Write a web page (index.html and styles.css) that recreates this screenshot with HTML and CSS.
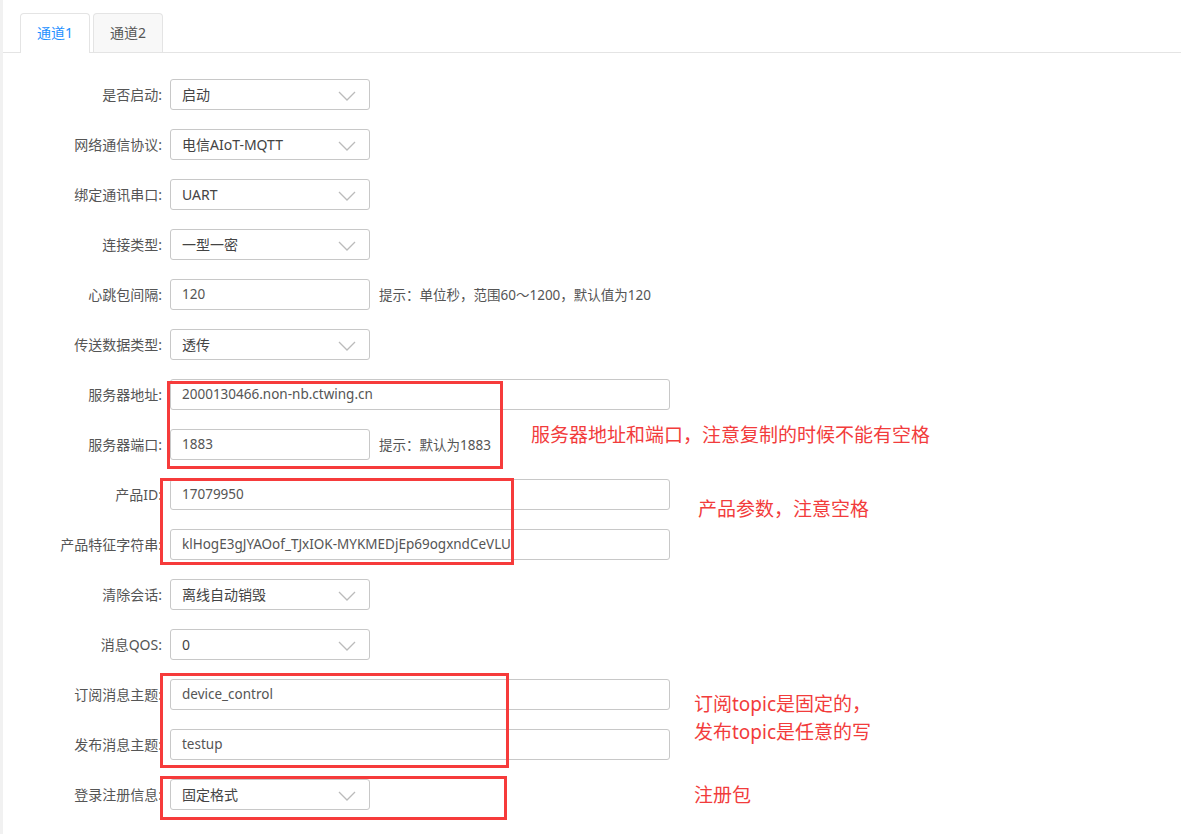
FILE: index.html
```html
<!DOCTYPE html>
<html lang="zh-CN">
<head>
  <meta charset="UTF-8" />
  <title>通道配置</title>
  <link rel="stylesheet" href="styles.css">
</head>
<body>
  <div class="page">
    <div class="tabs">
      <div class="tab active">通道1</div>
      <div class="tab">通道2</div>
    </div>

    <form class="config">
      <div class="row">
        <label>是否启动:</label>
        <div class="select">启动<svg class="arrow" viewBox="0 0 18 10"><polyline points="1,1 9,9 17,1" /></svg></div>
      </div>
      <div class="row">
        <label>网络通信协议:</label>
        <div class="select">电信AIoT-MQTT<svg class="arrow" viewBox="0 0 18 10"><polyline points="1,1 9,9 17,1" /></svg></div>
      </div>
      <div class="row">
        <label>绑定通讯串口:</label>
        <div class="select">UART<svg class="arrow" viewBox="0 0 18 10"><polyline points="1,1 9,9 17,1" /></svg></div>
      </div>
      <div class="row">
        <label>连接类型:</label>
        <div class="select">一型一密<svg class="arrow" viewBox="0 0 18 10"><polyline points="1,1 9,9 17,1" /></svg></div>
      </div>
      <div class="row">
        <label>心跳包间隔:</label>
        <div class="input short">120</div>
        <span class="hint">提示：单位秒，范围60～1200，默认值为120</span>
      </div>
      <div class="row">
        <label>传送数据类型:</label>
        <div class="select">透传<svg class="arrow" viewBox="0 0 18 10"><polyline points="1,1 9,9 17,1" /></svg></div>
      </div>
      <div class="row">
        <label>服务器地址:</label>
        <div class="input">2000130466.non-nb.ctwing.cn</div>
      </div>
      <div class="row">
        <label>服务器端口:</label>
        <div class="input short">1883</div>
        <span class="hint">提示：默认为1883</span>
      </div>
      <div class="row">
        <label>产品ID:</label>
        <div class="input">17079950</div>
      </div>
      <div class="row">
        <label>产品特征字符串:</label>
        <div class="input">klHogE3gJYAOof_TJxIOK-MYKMEDjEp69ogxndCeVLU</div>
      </div>
      <div class="row">
        <label>清除会话:</label>
        <div class="select">离线自动销毁<svg class="arrow" viewBox="0 0 18 10"><polyline points="1,1 9,9 17,1" /></svg></div>
      </div>
      <div class="row">
        <label>消息QOS:</label>
        <div class="select">0<svg class="arrow" viewBox="0 0 18 10"><polyline points="1,1 9,9 17,1" /></svg></div>
      </div>
      <div class="row">
        <label>订阅消息主题:</label>
        <div class="input">device_control</div>
      </div>
      <div class="row">
        <label>发布消息主题:</label>
        <div class="input">testup</div>
      </div>
      <div class="row">
        <label>登录注册信息:</label>
        <div class="select">固定格式<svg class="arrow" viewBox="0 0 18 10"><polyline points="1,1 9,9 17,1" /></svg></div>
      </div>
    </form>

    <!-- annotations drawn over the form -->
    <div class="mark mark-server"></div>
    <div class="mark mark-product"></div>
    <div class="mark mark-topic"></div>
    <div class="mark mark-login"></div>

    <div class="note note-server">服务器地址和端口，注意复制的时候不能有空格</div>
    <div class="note note-product">产品参数，注意空格</div>
    <div class="note note-topic">订阅topic是固定的，<br>发布topic是任意的写</div>
    <div class="note note-login">注册包</div>
  </div>
</body>
</html>
```

FILE: styles.css
```css
body {
  margin: 0;
  font-family: 'Noto Sans', 'Noto Sans CJK SC', sans-serif;
  font-size: 14px;
  color: #555;
  background: #fff;
}

.page {
  position: relative;
  min-height: 834px;
  border-left: 3px solid #f1f1f1;
}

.tabs {
  display: flex;
  gap: 3px;
  padding: 13px 0 0 17px;
  border-bottom: 1px solid #e4e4e4;
}

.tab {
  height: 38px;
  line-height: 38px;
  padding: 0 16px;
  border: 1px solid #e4e4e4;
  border-bottom: none;
  border-radius: 4px 4px 0 0;
  background: #f8f8f8;
  color: #555;
  margin-bottom: -1px;
}

.tab.active {
  background: #fff;
  color: #1e90ff;
  height: 39px;
}

.config {
  padding-top: 16px;
}

.row {
  display: flex;
  align-items: center;
  height: 50px;
}

.row label {
  width: 159px;
  text-align: right;
  margin-right: 8px;
  color: #555;
}

.select, .input {
  box-sizing: border-box;
  height: 31px;
  line-height: 29px;
  border: 1px solid #c8c8c8;
  border-radius: 3px;
  padding: 0 11px;
  color: #444;
  white-space: nowrap;
}

.select {
  width: 200px;
  display: flex;
  align-items: center;
  justify-content: space-between;
}

.input {
  width: 500px;
  font-size: 13.5px;
  color: #555;
}

.input.short {
  width: 200px;
}

.arrow {
  width: 18px;
  height: 10px;
  margin-right: 2px;
  margin-top: 4px;
}

.arrow polyline {
  fill: none;
  stroke: #bbb;
  stroke-width: 1.3;
}

.hint {
  margin-left: 9px;
  font-size: 13.5px;
  color: #555;
}

.mark {
  position: absolute;
  border: 3px solid #f63b3b;
  box-sizing: border-box;
}

.mark-server { left: 164px; top: 381px; width: 336px; height: 88px; }
.mark-product { left: 157px; top: 478px; width: 354px; height: 87px; }
.mark-topic { left: 157px; top: 673px; width: 349px; height: 95px; }
.mark-login { left: 157px; top: 776px; width: 347px; height: 44px; }

.note {
  position: absolute;
  font-size: 19px;
  line-height: 28px;
  color: #f23c3c;
  white-space: nowrap;
}

.note-server { left: 528px; top: 421px; }
.note-product { left: 695px; top: 495px; }
.note-topic { left: 691px; top: 690px; }
.note-login { left: 691px; top: 781px; }
```
